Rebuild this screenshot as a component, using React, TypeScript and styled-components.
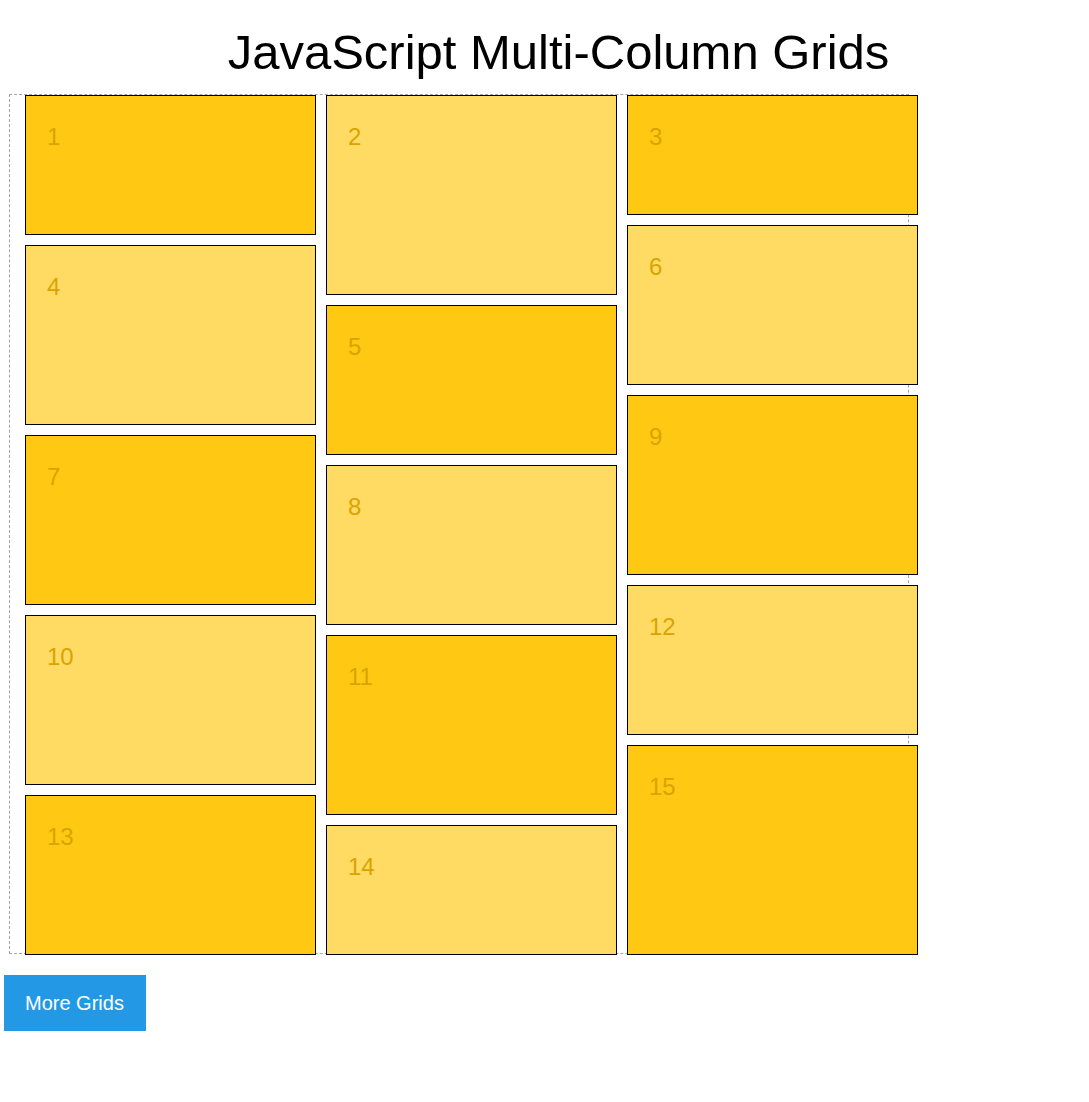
import React from 'react';
import styled, { createGlobalStyle } from 'styled-components';

const GlobalStyle = createGlobalStyle`
  body {
    margin: 0;
    background: #fff;
    font-family: 'Liberation Sans', Arial, Helvetica, sans-serif;
  }
`;

type Tile = { id: number; height: number; light: boolean };

// three columns, filled as the layout engine placed them
const columns: Tile[][] = [
  [
    { id: 1, height: 140, light: false },
    { id: 4, height: 180, light: true },
    { id: 7, height: 170, light: false },
    { id: 10, height: 170, light: true },
    { id: 13, height: 160, light: false },
  ],
  [
    { id: 2, height: 200, light: true },
    { id: 5, height: 150, light: false },
    { id: 8, height: 160, light: true },
    { id: 11, height: 180, light: false },
    { id: 14, height: 130, light: true },
  ],
  [
    { id: 3, height: 120, light: false },
    { id: 6, height: 160, light: true },
    { id: 9, height: 180, light: false },
    { id: 12, height: 150, light: true },
    { id: 15, height: 210, light: false },
  ],
];

const Page = styled.div`
  display: flex;
  flex-direction: column;
  align-items: flex-start;
`;

const Title = styled.h1`
  align-self: stretch;
  margin: 0 0 14px;
  padding: 25px 0 0 28px;
  font-size: 49px;
  font-weight: 400;
  line-height: 55px;
  color: #000;
  text-align: center;
`;

const Grid = styled.div`
  box-sizing: border-box;
  display: flex;
  align-items: flex-start;
  gap: 10px;
  width: 900px;
  height: 860px;
  margin-left: 9px;
  padding-left: 15px;
  border: 1px dashed #a5a5a5;
`;

const Column = styled.div`
  display: flex;
  flex-direction: column;
  gap: 10px;
  width: 291px;
  flex-shrink: 0;
`;

const Item = styled.div<{ $light: boolean }>`
  box-sizing: border-box;
  padding: 27px 0 0 21px;
  border: 1px solid #000;
  background: ${(p) => (p.$light ? '#ffdb64' : '#ffc812')};
  color: #daa400;
  font-size: 24px;
`;

const MoreButton = styled.button`
  margin: 21px 0 0 4px;
  height: 56px;
  padding: 0 22px 0 21px;
  border: none;
  background: #2399e6;
  color: #fff;
  font-family: inherit;
  font-size: 20px;
  cursor: pointer;
`;

export default function App() {
  return (
    <Page>
      <GlobalStyle />
      <Title>JavaScript Multi-Column Grids</Title>
      <Grid>
        {columns.map((col, i) => (
          <Column key={i}>
            {col.map((tile) => (
              <Item key={tile.id} $light={tile.light} style={{ height: tile.height }}>
                {tile.id}
              </Item>
            ))}
          </Column>
        ))}
      </Grid>
      <MoreButton>More Grids</MoreButton>
    </Page>
  );
}
